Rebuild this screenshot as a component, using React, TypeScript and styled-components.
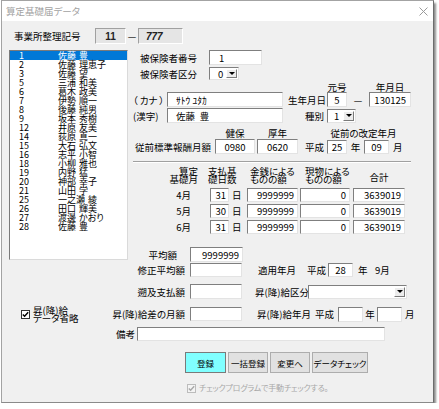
import React from "react";
import styled, { createGlobalStyle } from "styled-components";

const Global = createGlobalStyle`
  html, body { margin: 0; padding: 0; background: #ffffff; }
  body {
    font-family: "Noto Sans CJK JP", "Noto Sans", sans-serif;
    font-size: 9.5px;
    color: #000;
    font-feature-settings: "palt";
  }
  * { box-sizing: border-box; }
`;

const Window = styled.div`
  margin-left: 1px;
  width: 433px;
  height: 403px;
  border: 1px solid #a3a3a3;
  border-right-color: #6c6c6c;
  border-bottom-color: #8a8a8a;
  box-shadow: 2px 3px 2px rgba(0, 0, 0, 0.45);
  background: #f0f0f0;
  display: flex;
  flex-direction: column;
  overflow: hidden;
`;

const TitleBar = styled.div`
  height: 20px;
  flex: none;
  background: #ffffff;
  display: flex;
  align-items: center;
  justify-content: space-between;
  padding: 0 5px 0 4px;
  color: #a2a2a2;
`;

const Body = styled.div`
  flex: 1;
  display: flex;
  flex-direction: column;
`;

const Row = styled.div<{ $mt?: number; $h?: number; $pl?: number }>`
  display: flex;
  align-items: center;
  flex: none;
  margin-top: ${(p) => p.$mt ?? 0}px;
  height: ${(p) => (p.$h ? `${p.$h}px` : "auto")};
  padding-left: ${(p) => p.$pl ?? 0}px;
`;

const Text = styled.div<{
  $w?: number;
  $ml?: number;
  $align?: "left" | "center" | "right";
  $pl?: number;
  $pr?: number;
}>`
  flex: none;
  white-space: nowrap;
  width: ${(p) => (p.$w ? `${p.$w}px` : "auto")};
  margin-left: ${(p) => p.$ml ?? 0}px;
  padding-left: ${(p) => p.$pl ?? 0}px;
  padding-right: ${(p) => p.$pr ?? 0}px;
  text-align: ${(p) => p.$align ?? "left"};
  line-height: 10px;
`;

const Field = styled.div<{
  $w: number;
  $h: number;
  $ml?: number;
  $align?: "left" | "center" | "right";
  $pad?: number;
}>`
  flex: none;
  width: ${(p) => p.$w}px;
  height: ${(p) => p.$h}px;
  margin-left: ${(p) => p.$ml ?? 0}px;
  background: #ffffff;
  border: 1px solid;
  border-color: #7f7f7f #e3e3e3 #e3e3e3 #7f7f7f;
  display: flex;
  align-items: center;
  justify-content: ${(p) =>
    p.$align === "right" ? "flex-end" : p.$align === "center" ? "center" : "flex-start"};
  padding: 0 ${(p) => p.$pad ?? 2}px;
  white-space: nowrap;
  line-height: 10px;
`;

const InfoBox = styled.div<{ $w: number; $italic?: boolean; $center?: boolean }>`
  flex: none;
  width: ${(p) => p.$w}px;
  height: 16px;
  background: #e5e5e5;
  border: 1px solid;
  border-color: #a0a0a0 #ffffff #ffffff #a0a0a0;
  display: flex;
  align-items: center;
  justify-content: ${(p) => (p.$center ? "center" : "flex-start")};
  padding-left: ${(p) => (p.$center ? 0 : 7)}px;
  font-family: "Liberation Sans", Arial, sans-serif;
  font-weight: bold;
  font-size: 10px;
  font-style: ${(p) => (p.$italic ? "italic" : "normal")};
  color: #222;
`;

const SelectBox = styled.div<{ $w: number; $h: number; $ml?: number }>`
  flex: none;
  width: ${(p) => p.$w}px;
  height: ${(p) => p.$h}px;
  margin-left: ${(p) => p.$ml ?? 0}px;
  background: #ffffff;
  border: 1px solid;
  border-color: #7f7f7f #e3e3e3 #e3e3e3 #7f7f7f;
  display: flex;
  align-items: stretch;
  padding: 1px;
`;

const SelectValue = styled.div<{ $pl?: number }>`
  flex: 1;
  display: flex;
  align-items: center;
  padding-left: ${(p) => p.$pl ?? 7}px;
  line-height: 10px;
`;

const ArrowBtn = styled.div`
  flex: none;
  width: 11px;
  background: #ececec;
  border: 1px solid;
  border-color: #ffffff #7a7a7a #7a7a7a #ffffff;
  display: flex;
  align-items: center;
  justify-content: center;
  &::after {
    content: "";
    border-left: 3px solid transparent;
    border-right: 3px solid transparent;
    border-top: 3px solid #000;
  }
`;

const MainSection = styled.div`
  display: flex;
  margin-top: 6px;
  padding-left: 7px;
  flex: none;
`;

const ListBox = styled.div`
  flex: none;
  width: 119px;
  height: 210px;
  background: #ffffff;
  border: 1px solid;
  border-color: #7a7a7a #dadada #dadada #7a7a7a;
  display: flex;
  flex-direction: column;
  font-size: 9px;
`;

const ListItem = styled.div<{ $selected?: boolean }>`
  display: flex;
  align-items: center;
  height: 9px;
  line-height: 9px;
  flex: none;
  background: ${(p) => (p.$selected ? "#0078d7" : "transparent")};
  color: ${(p) => (p.$selected ? "#ffffff" : "#000000")};
`;

const ItemNo = styled.span`
  width: 48px;
  padding-left: 9px;
  flex: none;
`;

const ItemName = styled.span`
  white-space: nowrap;
`;

const RightPanel = styled.div`
  flex: none;
  width: 280px;
  margin-left: 5px;
  display: flex;
  flex-direction: column;
`;

const Separator = styled.div`
  flex: none;
  width: 278px;
  height: 2px;
  margin-top: 7px;
  border-top: 1px solid #a0a0a0;
  border-bottom: 1px solid #ffffff;
`;

const Table = styled.div`
  display: grid;
  grid-template-columns: 77px 37px 53px 53px 52px;
  grid-template-rows: 19px 14px 14px 14px;
  row-gap: 2px;
  margin-top: 4px;
  flex: none;
`;

const HeadCell = styled.div<{
  $align?: "left" | "center" | "right";
  $pl?: number;
  $pr?: number;
  $ml?: number;
  $middle?: boolean;
}>`
  line-height: 8px;
  white-space: nowrap;
  text-align: ${(p) => p.$align ?? "left"};
  padding-left: ${(p) => p.$pl ?? 0}px;
  padding-right: ${(p) => p.$pr ?? 0}px;
  margin-left: ${(p) => p.$ml ?? 0}px;
  align-self: ${(p) => (p.$middle ? "center" : "start")};
`;

const MonthCell = styled.div`
  display: flex;
  align-items: center;
  justify-content: flex-end;
  padding-right: 19px;
  line-height: 10px;
`;

const DaysCell = styled.div`
  display: flex;
  align-items: center;
`;

const LeftLabel = styled.div<{ $w: number }>`
  flex: none;
  width: ${(p) => p.$w}px;
  display: flex;
  align-items: center;
  justify-content: space-between;
  line-height: 10px;
  white-space: nowrap;
`;

const RightText = styled.span`
  margin-left: auto;
`;

const CheckGroup = styled.div<{ $pl?: number }>`
  display: flex;
  align-items: center;
  padding-left: ${(p) => p.$pl ?? 0}px;
`;

const CheckBox = styled.span<{ $disabled?: boolean }>`
  flex: none;
  width: 9px;
  height: 9px;
  border: 1px solid ${(p) => (p.$disabled ? "#bcbcbc" : "#333333")};
  background: ${(p) => (p.$disabled ? "#f4f4f4" : "#ffffff")};
  display: flex;
  align-items: center;
  justify-content: center;
`;

const CheckText = styled.div<{ $disabled?: boolean }>`
  margin-left: 3px;
  line-height: 8px;
  white-space: nowrap;
  font-size: ${(p) => (p.$disabled ? "8px" : "9.5px")};
  letter-spacing: ${(p) => (p.$disabled ? "-0.2px" : "0")};
  color: ${(p) => (p.$disabled ? "#a8a8a8" : "#000000")};
`;

const ButtonRow = styled.div`
  display: flex;
  gap: 2px;
  margin-top: 11px;
  padding-left: 183px;
  flex: none;
`;

const Button = styled.button<{ $w: number; $primary?: boolean }>`
  flex: none;
  width: ${(p) => p.$w}px;
  height: 21px;
  padding: 0;
  font-family: inherit;
  font-size: 8.5px;
  font-feature-settings: "palt";
  white-space: nowrap;
  color: #000;
  background: ${(p) => (p.$primary ? "#80ffff" : "#e1e1e1")};
  border: 1px solid ${(p) => (p.$primary ? "#7a7a7a" : "#adadad")};
  line-height: 10px;
`;

const Check = ({ disabled }: { disabled?: boolean }) => (
  <CheckBox $disabled={disabled}>
    <svg width="7" height="7" viewBox="0 0 7 7">
      <path
        d="M0.8 3.4 L2.6 5.2 L6.2 1.2"
        fill="none"
        stroke={disabled ? "#a8a8a8" : "#000"}
        strokeWidth="1.4"
      />
    </svg>
  </CheckBox>
);

const Select = ({
  w,
  h,
  ml,
  value,
  pl,
}: {
  w: number;
  h: number;
  ml?: number;
  value?: string;
  pl?: number;
}) => (
  <SelectBox $w={w} $h={h} $ml={ml}>
    <SelectValue $pl={pl}>{value}</SelectValue>
    <ArrowBtn />
  </SelectBox>
);

const people: [string, string][] = [
  ["1", "佐藤\u2004豊"],
  ["2", "佐藤\u2004理恵子"],
  ["3", "佐藤\u2004望"],
  ["5", "三浦\u2004和美"],
  ["6", "葛木\u2004政美"],
  ["7", "伊勢\u2004順一"],
  ["8", "後藤\u2004純男"],
  ["9", "坂本\u2004秀樹"],
  ["12", "井原\u2004友美"],
  ["14", "荻原\u2004真一"],
  ["15", "大石\u2004弘文"],
  ["16", "志平\u2004小智"],
  ["18", "小柳\u2004雅也"],
  ["19", "内野\u2004猛"],
  ["20", "神部\u2004幸子"],
  ["21", "山田\u2004学"],
  ["25", "一之瀬\u2004綾"],
  ["26", "田口\u2004輝美"],
  ["27", "渡邊\u2004かおり"],
  ["28", "佐藤\u2004豊"],
];

const months: [string, string][] = [
  ["4月", "31"],
  ["5月", "30"],
  ["6月", "31"],
];

export default function App() {
  return (
    <>
      <Global />
      <Window>
        <TitleBar>
          <span>算定基礎届データ</span>
          <svg width="9" height="9" viewBox="0 0 9 9">
            <path d="M0.5 0.5 L8.5 8.5 M8.5 0.5 L0.5 8.5" stroke="#9a9a9a" strokeWidth="1" />
          </svg>
        </TitleBar>
        <Body>
          <Row $mt={7} $h={16} $pl={12}>
            <Text $w={81}>事業所整理記号</Text>
            <InfoBox $w={31} $center>
              11
            </InfoBox>
            <Text $w={12} $align="center">
              —
            </Text>
            <InfoBox $w={45} $italic>
              777
            </InfoBox>
          </Row>

          <MainSection>
            <ListBox>
              {people.map(([no, name], i) => (
                <ListItem key={no} $selected={i === 0}>
                  <ItemNo>{no}</ItemNo>
                  <ItemName>{name}</ItemName>
                </ListItem>
              ))}
            </ListBox>

            <RightPanel>
              <Row $h={15}>
                <Text $w={76} $pl={7}>
                  被保険者番号
                </Text>
                <Field $w={53} $h={15} $pad={9}>
                  1
                </Field>
              </Row>
              <Row $mt={2} $h={13}>
                <Text $w={76} $pl={7}>
                  被保険者区分
                </Text>
                <Select w={30} h={13} value="0" />
              </Row>
              <Row $mt={2} $h={9}>
                <Text $w={20} $ml={194} $align="center">
                  元号
                </Text>
                <Text $w={42} $ml={22} $align="center">
                  年月日
                </Text>
              </Row>
              <Row $mt={1} $h={15}>
                <Text $w={34}>（{"\u2009"}カナ{"\u2009"}）</Text>
                <Field $w={116} $h={15} $pad={8}>
                  ｻﾄｳ ﾕﾀｶ
                </Field>
                <Text $w={39} $ml={5}>
                  生年月日
                </Text>
                <Field $w={20} $h={15} $align="center">
                  5
                </Field>
                <Text $w={22} $align="center">
                  —
                </Text>
                <Field $w={42} $h={15} $align="right" $pad={4}>
                  130125
                </Field>
              </Row>
              <Row $mt={1} $h={15}>
                <Text $w={34}>(漢字)</Text>
                <Field $w={116} $h={15} $pad={8}>
                  佐藤{"\u2002"}豊
                </Field>
                <Text $w={39} $ml={5} $align="right" $pr={3}>
                  種別
                </Text>
                <Select w={29} h={14} value="1" pl={5} />
              </Row>
              <Row $mt={5} $h={9}>
                <Text $w={40} $ml={82} $align="center">
                  健保
                </Text>
                <Text $w={41} $ml={2} $align="center">
                  厚年
                </Text>
                <Text $w={73} $ml={29} $align="center">
                  従前の改定年月
                </Text>
              </Row>
              <Row $mt={2} $h={15}>
                <Text $w={82} $pl={2}>
                  従前標準報酬月額
                </Text>
                <Field $w={40} $h={15} $align="center">
                  0980
                </Field>
                <Field $w={41} $h={15} $ml={2} $align="center">
                  0620
                </Field>
                <Text $w={22} $ml={7}>
                  平成
                </Text>
                <Field $w={20} $h={14} $align="center">
                  25
                </Field>
                <Text $w={17} $align="center">
                  年
                </Text>
                <Field $w={25} $h={14} $align="center">
                  09
                </Field>
                <Text $ml={4}>月</Text>
              </Row>

              <Separator />

              <Table>
                <HeadCell $align="right" $pr={12}>
                  算定
                  <br />
                  基礎月
                </HeadCell>
                <HeadCell $ml={-2}>
                  支払基
                  <br />
                  礎日数
                </HeadCell>
                <HeadCell $pl={3}>
                  金銭による
                  <br />
                  ものの額
                </HeadCell>
                <HeadCell $pl={5}>
                  現物による
                  <br />
                  ものの額
                </HeadCell>
                <HeadCell $align="center" $middle>
                  合計
                </HeadCell>
                {months.map(([m, d]) => (
                  <React.Fragment key={m}>
                    <MonthCell>{m}</MonthCell>
                    <DaysCell>
                      <Field $w={19} $h={14} $align="right" $pad={2}>
                        {d}
                      </Field>
                      <Text $ml={3}>日</Text>
                    </DaysCell>
                    <Field $w={51} $h={14} $align="right" $pad={3}>
                      9999999
                    </Field>
                    <Field $w={50} $h={14} $align="right" $pad={3}>
                      0
                    </Field>
                    <Field $w={52} $h={14} $align="right" $pad={3}>
                      3639019
                    </Field>
                  </React.Fragment>
                ))}
              </Table>

              <Row $mt={13} $h={15}>
                <Text $w={44} $align="right">
                  平均額
                </Text>
                <Field $w={53} $h={15} $ml={13} $align="right" $pad={3}>
                  9999999
                </Field>
              </Row>
            </RightPanel>
          </MainSection>

          <Row $mt={1} $h={14}>
            <LeftLabel $w={183}>
              <RightText>修正平均額</RightText>
            </LeftLabel>
            <Field $w={52} $h={14} $ml={5} />
            <Text $w={49} $ml={16}>
              適用年月
            </Text>
            <Text $w={21}>平成</Text>
            <Field $w={25} $h={14} $align="center">
              28
            </Field>
            <Text $w={17} $ml={5}>
              年
            </Text>
            <Text>9月</Text>
          </Row>

          <Row $mt={7} $h={15}>
            <LeftLabel $w={183}>
              <RightText>遡及支払額</RightText>
            </LeftLabel>
            <Field $w={52} $h={15} $ml={5} />
            <Text $w={53} $ml={13}>
              昇(降)給区分
            </Text>
            <Select w={99} h={14} />
          </Row>

          <Row $mt={8} $h={14}>
            <LeftLabel $w={183}>
              <CheckGroup $pl={19}>
                <Check />
                <CheckText>
                  昇(降)給
                  <br />
                  データ省略
                </CheckText>
              </CheckGroup>
              <RightText>昇(降)給差の月額</RightText>
            </LeftLabel>
            <Field $w={52} $h={14} $ml={5} />
            <Text $w={58} $ml={15}>
              昇(降)給年月
            </Text>
            <Text $w={23}>平成</Text>
            <Field $w={25} $h={15} />
            <Text $w={14} $align="center">
              年
            </Text>
            <Field $w={25} $h={15} />
            <Text $ml={3}>月</Text>
          </Row>

          <Row $mt={6} $h={14}>
            <LeftLabel $w={133}>
              <RightText>備考</RightText>
            </LeftLabel>
            <Field $w={248} $h={14} $ml={2} />
          </Row>

          <ButtonRow>
            <Button $w={41} $primary>
              登録
            </Button>
            <Button $w={40}>一括登録</Button>
            <Button $w={40}>変更へ</Button>
            <Button $w={56}>データチェック</Button>
          </ButtonRow>

          <Row $mt={10} $h={10} $pl={185}>
            <CheckGroup>
              <Check disabled />
              <CheckText $disabled>チェックプログラムで手動チェックする。</CheckText>
            </CheckGroup>
          </Row>
        </Body>
      </Window>
    </>
  );
}
